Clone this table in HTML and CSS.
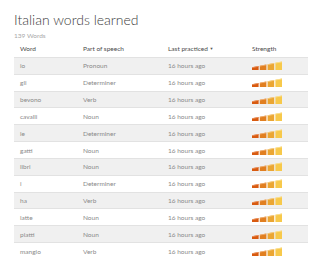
FILE: index.html
```html
<!DOCTYPE html>
<html>
<head>
<meta charset="utf-8">
<link rel="stylesheet" href="styles.css">
</head>
<body>
<div class="page">
  <h1 class="title">Italian words learned</h1>
  <div class="count">139 Words</div>
  <table class="words">
    <thead>
      <tr>
        <th class="c1">Word</th>
        <th class="c2">Part of speech</th>
        <th class="c3">Last practiced <span class="caret">▼</span></th>
        <th class="c4">Strength</th>
      </tr>
    </thead>
    <tbody id="rows">
      <tr class="odd"><td>io</td><td>Pronoun</td><td>16 hours ago</td><td><svg class="bars" viewBox="0 0 31 9" width="31" height="9"><polygon points="0,9 0,6.3 6.6,5 6.6,9" fill="#d85a10"/><polygon points="0,6.3 6.6,5 6.6,5.8 0,7" fill="#ec9a68"/><polygon points="7.8,9 7.8,4.8 14.4,3.5 14.4,9" fill="#e17f20"/><polygon points="7.8,4.8 14.4,3.5 14.4,4.3 7.8,5.6" fill="#f0b47c"/><polygon points="15.6,9 15.6,3.3 22.2,2 22.2,9" fill="#eba633"/><polygon points="15.6,3.3 22.2,2 22.2,2.8 15.6,4.1" fill="#f6d08c"/><polygon points="23.4,9 23.4,1.8 30,0.5 30,9" fill="#f7c94b"/><polygon points="23.4,1.8 30,0.5 30,1.3 23.4,2.6" fill="#fbe29a"/></svg></td></tr>
      <tr><td>gli</td><td>Determiner</td><td>16 hours ago</td><td><svg class="bars" viewBox="0 0 31 9" width="31" height="9"><polygon points="0,9 0,6.3 6.6,5 6.6,9" fill="#d85a10"/><polygon points="0,6.3 6.6,5 6.6,5.8 0,7" fill="#ec9a68"/><polygon points="7.8,9 7.8,4.8 14.4,3.5 14.4,9" fill="#e17f20"/><polygon points="7.8,4.8 14.4,3.5 14.4,4.3 7.8,5.6" fill="#f0b47c"/><polygon points="15.6,9 15.6,3.3 22.2,2 22.2,9" fill="#eba633"/><polygon points="15.6,3.3 22.2,2 22.2,2.8 15.6,4.1" fill="#f6d08c"/><polygon points="23.4,9 23.4,1.8 30,0.5 30,9" fill="#f7c94b"/><polygon points="23.4,1.8 30,0.5 30,1.3 23.4,2.6" fill="#fbe29a"/></svg></td></tr>
      <tr class="odd"><td>bevono</td><td>Verb</td><td>16 hours ago</td><td><svg class="bars" viewBox="0 0 31 9" width="31" height="9"><polygon points="0,9 0,6.3 6.6,5 6.6,9" fill="#d85a10"/><polygon points="0,6.3 6.6,5 6.6,5.8 0,7" fill="#ec9a68"/><polygon points="7.8,9 7.8,4.8 14.4,3.5 14.4,9" fill="#e17f20"/><polygon points="7.8,4.8 14.4,3.5 14.4,4.3 7.8,5.6" fill="#f0b47c"/><polygon points="15.6,9 15.6,3.3 22.2,2 22.2,9" fill="#eba633"/><polygon points="15.6,3.3 22.2,2 22.2,2.8 15.6,4.1" fill="#f6d08c"/><polygon points="23.4,9 23.4,1.8 30,0.5 30,9" fill="#f7c94b"/><polygon points="23.4,1.8 30,0.5 30,1.3 23.4,2.6" fill="#fbe29a"/></svg></td></tr>
      <tr><td>cavalli</td><td>Noun</td><td>16 hours ago</td><td><svg class="bars" viewBox="0 0 31 9" width="31" height="9"><polygon points="0,9 0,6.3 6.6,5 6.6,9" fill="#d85a10"/><polygon points="0,6.3 6.6,5 6.6,5.8 0,7" fill="#ec9a68"/><polygon points="7.8,9 7.8,4.8 14.4,3.5 14.4,9" fill="#e17f20"/><polygon points="7.8,4.8 14.4,3.5 14.4,4.3 7.8,5.6" fill="#f0b47c"/><polygon points="15.6,9 15.6,3.3 22.2,2 22.2,9" fill="#eba633"/><polygon points="15.6,3.3 22.2,2 22.2,2.8 15.6,4.1" fill="#f6d08c"/><polygon points="23.4,9 23.4,1.8 30,0.5 30,9" fill="#f7c94b"/><polygon points="23.4,1.8 30,0.5 30,1.3 23.4,2.6" fill="#fbe29a"/></svg></td></tr>
      <tr class="odd"><td>le</td><td>Determiner</td><td>16 hours ago</td><td><svg class="bars" viewBox="0 0 31 9" width="31" height="9"><polygon points="0,9 0,6.3 6.6,5 6.6,9" fill="#d85a10"/><polygon points="0,6.3 6.6,5 6.6,5.8 0,7" fill="#ec9a68"/><polygon points="7.8,9 7.8,4.8 14.4,3.5 14.4,9" fill="#e17f20"/><polygon points="7.8,4.8 14.4,3.5 14.4,4.3 7.8,5.6" fill="#f0b47c"/><polygon points="15.6,9 15.6,3.3 22.2,2 22.2,9" fill="#eba633"/><polygon points="15.6,3.3 22.2,2 22.2,2.8 15.6,4.1" fill="#f6d08c"/><polygon points="23.4,9 23.4,1.8 30,0.5 30,9" fill="#f7c94b"/><polygon points="23.4,1.8 30,0.5 30,1.3 23.4,2.6" fill="#fbe29a"/></svg></td></tr>
      <tr><td>gatti</td><td>Noun</td><td>16 hours ago</td><td><svg class="bars" viewBox="0 0 31 9" width="31" height="9"><polygon points="0,9 0,6.3 6.6,5 6.6,9" fill="#d85a10"/><polygon points="0,6.3 6.6,5 6.6,5.8 0,7" fill="#ec9a68"/><polygon points="7.8,9 7.8,4.8 14.4,3.5 14.4,9" fill="#e17f20"/><polygon points="7.8,4.8 14.4,3.5 14.4,4.3 7.8,5.6" fill="#f0b47c"/><polygon points="15.6,9 15.6,3.3 22.2,2 22.2,9" fill="#eba633"/><polygon points="15.6,3.3 22.2,2 22.2,2.8 15.6,4.1" fill="#f6d08c"/><polygon points="23.4,9 23.4,1.8 30,0.5 30,9" fill="#f7c94b"/><polygon points="23.4,1.8 30,0.5 30,1.3 23.4,2.6" fill="#fbe29a"/></svg></td></tr>
      <tr class="odd"><td>libri</td><td>Noun</td><td>16 hours ago</td><td><svg class="bars" viewBox="0 0 31 9" width="31" height="9"><polygon points="0,9 0,6.3 6.6,5 6.6,9" fill="#d85a10"/><polygon points="0,6.3 6.6,5 6.6,5.8 0,7" fill="#ec9a68"/><polygon points="7.8,9 7.8,4.8 14.4,3.5 14.4,9" fill="#e17f20"/><polygon points="7.8,4.8 14.4,3.5 14.4,4.3 7.8,5.6" fill="#f0b47c"/><polygon points="15.6,9 15.6,3.3 22.2,2 22.2,9" fill="#eba633"/><polygon points="15.6,3.3 22.2,2 22.2,2.8 15.6,4.1" fill="#f6d08c"/><polygon points="23.4,9 23.4,1.8 30,0.5 30,9" fill="#f7c94b"/><polygon points="23.4,1.8 30,0.5 30,1.3 23.4,2.6" fill="#fbe29a"/></svg></td></tr>
      <tr><td>i</td><td>Determiner</td><td>16 hours ago</td><td><svg class="bars" viewBox="0 0 31 9" width="31" height="9"><polygon points="0,9 0,6.3 6.6,5 6.6,9" fill="#d85a10"/><polygon points="0,6.3 6.6,5 6.6,5.8 0,7" fill="#ec9a68"/><polygon points="7.8,9 7.8,4.8 14.4,3.5 14.4,9" fill="#e17f20"/><polygon points="7.8,4.8 14.4,3.5 14.4,4.3 7.8,5.6" fill="#f0b47c"/><polygon points="15.6,9 15.6,3.3 22.2,2 22.2,9" fill="#eba633"/><polygon points="15.6,3.3 22.2,2 22.2,2.8 15.6,4.1" fill="#f6d08c"/><polygon points="23.4,9 23.4,1.8 30,0.5 30,9" fill="#f7c94b"/><polygon points="23.4,1.8 30,0.5 30,1.3 23.4,2.6" fill="#fbe29a"/></svg></td></tr>
      <tr class="odd"><td>ha</td><td>Verb</td><td>16 hours ago</td><td><svg class="bars" viewBox="0 0 31 9" width="31" height="9"><polygon points="0,9 0,6.3 6.6,5 6.6,9" fill="#d85a10"/><polygon points="0,6.3 6.6,5 6.6,5.8 0,7" fill="#ec9a68"/><polygon points="7.8,9 7.8,4.8 14.4,3.5 14.4,9" fill="#e17f20"/><polygon points="7.8,4.8 14.4,3.5 14.4,4.3 7.8,5.6" fill="#f0b47c"/><polygon points="15.6,9 15.6,3.3 22.2,2 22.2,9" fill="#eba633"/><polygon points="15.6,3.3 22.2,2 22.2,2.8 15.6,4.1" fill="#f6d08c"/><polygon points="23.4,9 23.4,1.8 30,0.5 30,9" fill="#f7c94b"/><polygon points="23.4,1.8 30,0.5 30,1.3 23.4,2.6" fill="#fbe29a"/></svg></td></tr>
      <tr><td>latte</td><td>Noun</td><td>16 hours ago</td><td><svg class="bars" viewBox="0 0 31 9" width="31" height="9"><polygon points="0,9 0,6.3 6.6,5 6.6,9" fill="#d85a10"/><polygon points="0,6.3 6.6,5 6.6,5.8 0,7" fill="#ec9a68"/><polygon points="7.8,9 7.8,4.8 14.4,3.5 14.4,9" fill="#e17f20"/><polygon points="7.8,4.8 14.4,3.5 14.4,4.3 7.8,5.6" fill="#f0b47c"/><polygon points="15.6,9 15.6,3.3 22.2,2 22.2,9" fill="#eba633"/><polygon points="15.6,3.3 22.2,2 22.2,2.8 15.6,4.1" fill="#f6d08c"/><polygon points="23.4,9 23.4,1.8 30,0.5 30,9" fill="#f7c94b"/><polygon points="23.4,1.8 30,0.5 30,1.3 23.4,2.6" fill="#fbe29a"/></svg></td></tr>
      <tr class="odd"><td>piatti</td><td>Noun</td><td>16 hours ago</td><td><svg class="bars" viewBox="0 0 31 9" width="31" height="9"><polygon points="0,9 0,6.3 6.6,5 6.6,9" fill="#d85a10"/><polygon points="0,6.3 6.6,5 6.6,5.8 0,7" fill="#ec9a68"/><polygon points="7.8,9 7.8,4.8 14.4,3.5 14.4,9" fill="#e17f20"/><polygon points="7.8,4.8 14.4,3.5 14.4,4.3 7.8,5.6" fill="#f0b47c"/><polygon points="15.6,9 15.6,3.3 22.2,2 22.2,9" fill="#eba633"/><polygon points="15.6,3.3 22.2,2 22.2,2.8 15.6,4.1" fill="#f6d08c"/><polygon points="23.4,9 23.4,1.8 30,0.5 30,9" fill="#f7c94b"/><polygon points="23.4,1.8 30,0.5 30,1.3 23.4,2.6" fill="#fbe29a"/></svg></td></tr>
      <tr><td>mangio</td><td>Verb</td><td>16 hours ago</td><td><svg class="bars" viewBox="0 0 31 9" width="31" height="9"><polygon points="0,9 0,6.3 6.6,5 6.6,9" fill="#d85a10"/><polygon points="0,6.3 6.6,5 6.6,5.8 0,7" fill="#ec9a68"/><polygon points="7.8,9 7.8,4.8 14.4,3.5 14.4,9" fill="#e17f20"/><polygon points="7.8,4.8 14.4,3.5 14.4,4.3 7.8,5.6" fill="#f0b47c"/><polygon points="15.6,9 15.6,3.3 22.2,2 22.2,9" fill="#eba633"/><polygon points="15.6,3.3 22.2,2 22.2,2.8 15.6,4.1" fill="#f6d08c"/><polygon points="23.4,9 23.4,1.8 30,0.5 30,9" fill="#f7c94b"/><polygon points="23.4,1.8 30,0.5 30,1.3 23.4,2.6" fill="#fbe29a"/></svg></td></tr>
    </tbody>
  </table>
</div>
</body>
</html>
```

FILE: styles.css
```css
html, body {
  margin: 0;
  padding: 0;
  background: #ffffff;
}
.page {
  padding: 11px 14px 0 14px;
  font-family: Lato, "Open Sans", sans-serif;
}
.title {
  margin: 0;
  font-size: 14px;
  line-height: 17px;
  font-weight: 300;
  color: #3c3c3c;
  letter-spacing: 0;
}
.count {
  margin-top: 3px;
  font-size: 6.5px;
  line-height: 9px;
  color: #a8a8a8;
}
.words {
  width: 292px;
  border-collapse: collapse;
  table-layout: fixed;
  margin-top: 0;
}
.words th, .words td {
  padding: 0 0 0 6px;
  text-align: left;
  font-size: 6.5px;
  white-space: nowrap;
}
.words th {
  height: 17px;
  font-weight: 400;
  color: #4b4b4b;
  border-bottom: 1px solid #e2e2e2;
}
.c1 { width: 57px; }
.c2 { width: 79px; }
.c3 { width: 78px; }
.c4 { width: 56px; }
.caret {
  font-size: 4px;
  vertical-align: 1px;
  color: #555;
}
.words td {
  height: 15.84px;
  color: #8a8a8a;
  border-bottom: 1px solid #e2e2e2;
}
.words tr.odd td {
  background: #f0f0f0;
}
.bars {
  display: block;
}
```
